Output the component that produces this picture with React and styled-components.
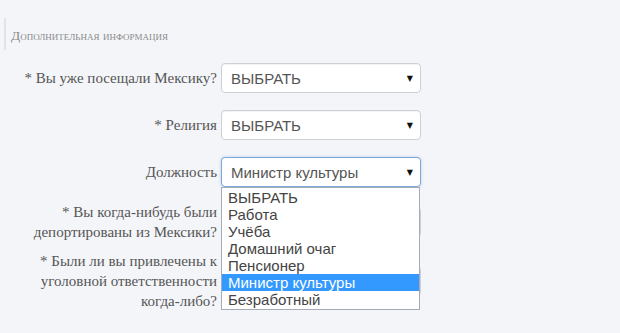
import styled, { createGlobalStyle } from 'styled-components';

const GlobalStyle = createGlobalStyle`
  html, body {
    margin: 0;
    padding: 0;
    background: #f4f5f9;
  }
`;

const options = [
  'ВЫБРАТЬ',
  'Работа',
  'Учёба',
  'Домашний очаг',
  'Пенсионер',
  'Министр культуры',
  'Безработный',
];

function Select({ value, focused, open }) {
  return (
    <SelectBox $focused={focused}>
      <SelectValue>{value}</SelectValue>
      <Arrow>▼</Arrow>
      {open && (
        <Dropdown>
          {options.map((o) => (
            <Option key={o} $active={o === value}>
              {o}
            </Option>
          ))}
        </Dropdown>
      )}
    </SelectBox>
  );
}

export default function App() {
  return (
    <Page>
      <GlobalStyle />
      <Legend>Дополнительная информация</Legend>
      <Form>
        <Row>
          <Label>* Вы уже посещали Мексику?</Label>
          <Select value="ВЫБРАТЬ" />
        </Row>
        <Row>
          <Label>* Религия</Label>
          <Select value="ВЫБРАТЬ" />
        </Row>
        <Row $raised>
          <Label>Должность</Label>
          <Select value="Министр культуры" focused open />
        </Row>
        <Row $offset="-2px">
          <Label>* Вы когда-нибудь были депортированы из Мексики?</Label>
          <Select value="ВЫБРАТЬ" />
        </Row>
        <Row $offset="-8px">
          <Label>* Были ли вы привлечены к уголовной ответственности когда-либо?</Label>
          <Select value="ВЫБРАТЬ" />
        </Row>
      </Form>
    </Page>
  );
}

const Page = styled.div`
  width: 620px;
  height: 333px;
  overflow: hidden;
  padding: 18px 0 0 4px;
  box-sizing: border-box;
  background: #f4f5f9;
`;

const Legend = styled.div`
  border-left: 2px solid #e2e3e8;
  padding: 10px 0 6px 5px;
  height: 16px;
  font-family: 'Liberation Serif', 'Times New Roman', serif;
  font-size: 13.5px;
  font-variant: small-caps;
  line-height: 16px;
  color: #8a8a8a;
`;

const Form = styled.div`
  display: flex;
  flex-direction: column;
  gap: 17px;
  margin: 13px 0 0 17px;
`;

const Row = styled.div`
  display: flex;
  align-items: center;
  gap: 4px;
  position: relative;
  z-index: ${(p) => (p.$raised ? 2 : 1)};
  margin-top: ${(p) => p.$offset || '0'};
`;

const Label = styled.div`
  width: 196px;
  text-align: right;
  font-family: 'Liberation Serif', 'Times New Roman', serif;
  font-size: 15px;
  line-height: 20px;
  color: #555;
`;

const SelectBox = styled.div`
  position: relative;
  width: 200px;
  height: 30px;
  box-sizing: border-box;
  display: flex;
  align-items: center;
  padding: 0 7px 0 9px;
  background: #fff;
  border: 1px solid ${(p) => (p.$focused ? '#7fa7d9' : '#cfd0d4')};
  border-radius: 4px;
  box-shadow: ${(p) =>
    p.$focused ? '0 0 3px rgba(102, 150, 220, 0.45)' : 'inset 0 1px 1px rgba(0,0,0,0.05)'};
`;

const SelectValue = styled.div`
  flex: 1;
  font-family: 'Liberation Sans', Arial, sans-serif;
  font-size: 15px;
  color: #555;
  white-space: nowrap;
`;

const Arrow = styled.span`
  font-family: 'DejaVu Sans', sans-serif;
  font-size: 8px;
  color: #111;
`;

const Dropdown = styled.div`
  position: absolute;
  top: 29px;
  left: -1px;
  width: 199px;
  box-sizing: border-box;
  background: #fff;
  border: 1px solid #a5abb8;
  padding: 1px 0;
`;

const Option = styled.div`
  height: 17px;
  line-height: 17px;
  padding-left: 6px;
  font-family: 'Liberation Sans', Arial, sans-serif;
  font-size: 15px;
  color: ${(p) => (p.$active ? '#fff' : '#444')};
  background: ${(p) => (p.$active ? '#3399ff' : 'transparent')};
`;
